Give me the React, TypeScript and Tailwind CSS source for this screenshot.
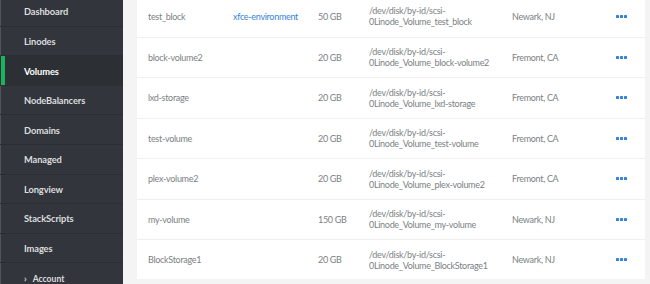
const nav = [
  'Dashboard',
  'Linodes',
  'Volumes',
  'NodeBalancers',
  'Domains',
  'Managed',
  'Longview',
  'StackScripts',
  'Images',
]

interface Volume {
  label: string
  linode?: string
  size: string
  path: string
  region: string
}

const volumes: Volume[] = [
  { label: 'test_block', linode: 'xfce-environment', size: '50 GB', path: 'test_block', region: 'Newark, NJ' },
  { label: 'block-volume2', size: '20 GB', path: 'block-volume2', region: 'Fremont, CA' },
  { label: 'lxd-storage', size: '20 GB', path: 'lxd-storage', region: 'Fremont, CA' },
  { label: 'test-volume', size: '20 GB', path: 'test-volume', region: 'Fremont, CA' },
  { label: 'plex-volume2', size: '20 GB', path: 'plex-volume2', region: 'Fremont, CA' },
  { label: 'my-volume', size: '150 GB', path: 'my-volume', region: 'Newark, NJ' },
  { label: 'BlockStorage1', size: '20 GB', path: 'BlockStorage1', region: 'Newark, NJ' },
]

function Dots() {
  return (
    <div className="flex gap-[1px]">
      <span className="block h-[3px] w-[3px] rounded-[0.5px] bg-[#3683dc]" />
      <span className="block h-[3px] w-[3px] rounded-[0.5px] bg-[#3683dc]" />
      <span className="block h-[3px] w-[3px] rounded-[0.5px] bg-[#3683dc]" />
    </div>
  )
}

export default function App() {
  return (
    <div className="flex h-[284px] w-[650px] overflow-hidden bg-[#f4f4f4] font-['Lato',sans-serif]">
      <aside className="relative w-[123px] shrink-0 bg-[#32363c]">
        <div className="absolute left-0 top-0 h-full w-[1px] bg-[#50555b]" />
        <div className="mt-[-3px]">
          {nav.map((item) => (
            <div
              key={item}
              className={`relative flex h-[29.6px] items-center border-b border-[#2b2f34] pl-[24px] pt-[2px] text-[9.3px] font-bold tracking-[-0.1px] ${
                item === 'Volumes' ? 'bg-[#2c3035] text-white' : 'text-[#dcdddf]'
              }`}
            >
              {item === 'Volumes' && (
                <span className="absolute left-[1px] top-0 h-full w-[4px] bg-[#1cb35c]" />
              )}
              {item}
            </div>
          ))}
          <div className="flex h-[29.6px] items-center gap-[6px] pl-[24px] pt-[2px] text-[8.6px] font-bold text-[#dcdddf]">
            <span className="text-[9px]">›</span>
            Account
          </div>
        </div>
      </aside>
      <main className="flex-1 pl-[14px] pr-[5px]">
        <div className="mt-[-4px] h-[283px] bg-white">
          {volumes.map((v, i) => (
            <div
              key={v.label}
              className={`flex h-[40.5px] items-center text-[9px] tracking-[-0.3px] text-[#7b7f84] ${
                i > 0 ? 'border-t border-[#f0f0f0]' : ''
              }`}
            >
              <div className="w-[96px] shrink-0 pl-[11px]">{v.label}</div>
              <div className="w-[85px] shrink-0 text-[#3683dc]">{v.linode}</div>
              <div className="w-[51px] shrink-0">{v.size}</div>
              <div className="w-[143px] shrink-0 leading-[11px]">
                /dev/disk/by-id/scsi-
                <br />
                0Linode_Volume_{v.path}
              </div>
              <div className="w-[104px] shrink-0">{v.region}</div>
              <Dots />
            </div>
          ))}
        </div>
      </main>
    </div>
  )
}
